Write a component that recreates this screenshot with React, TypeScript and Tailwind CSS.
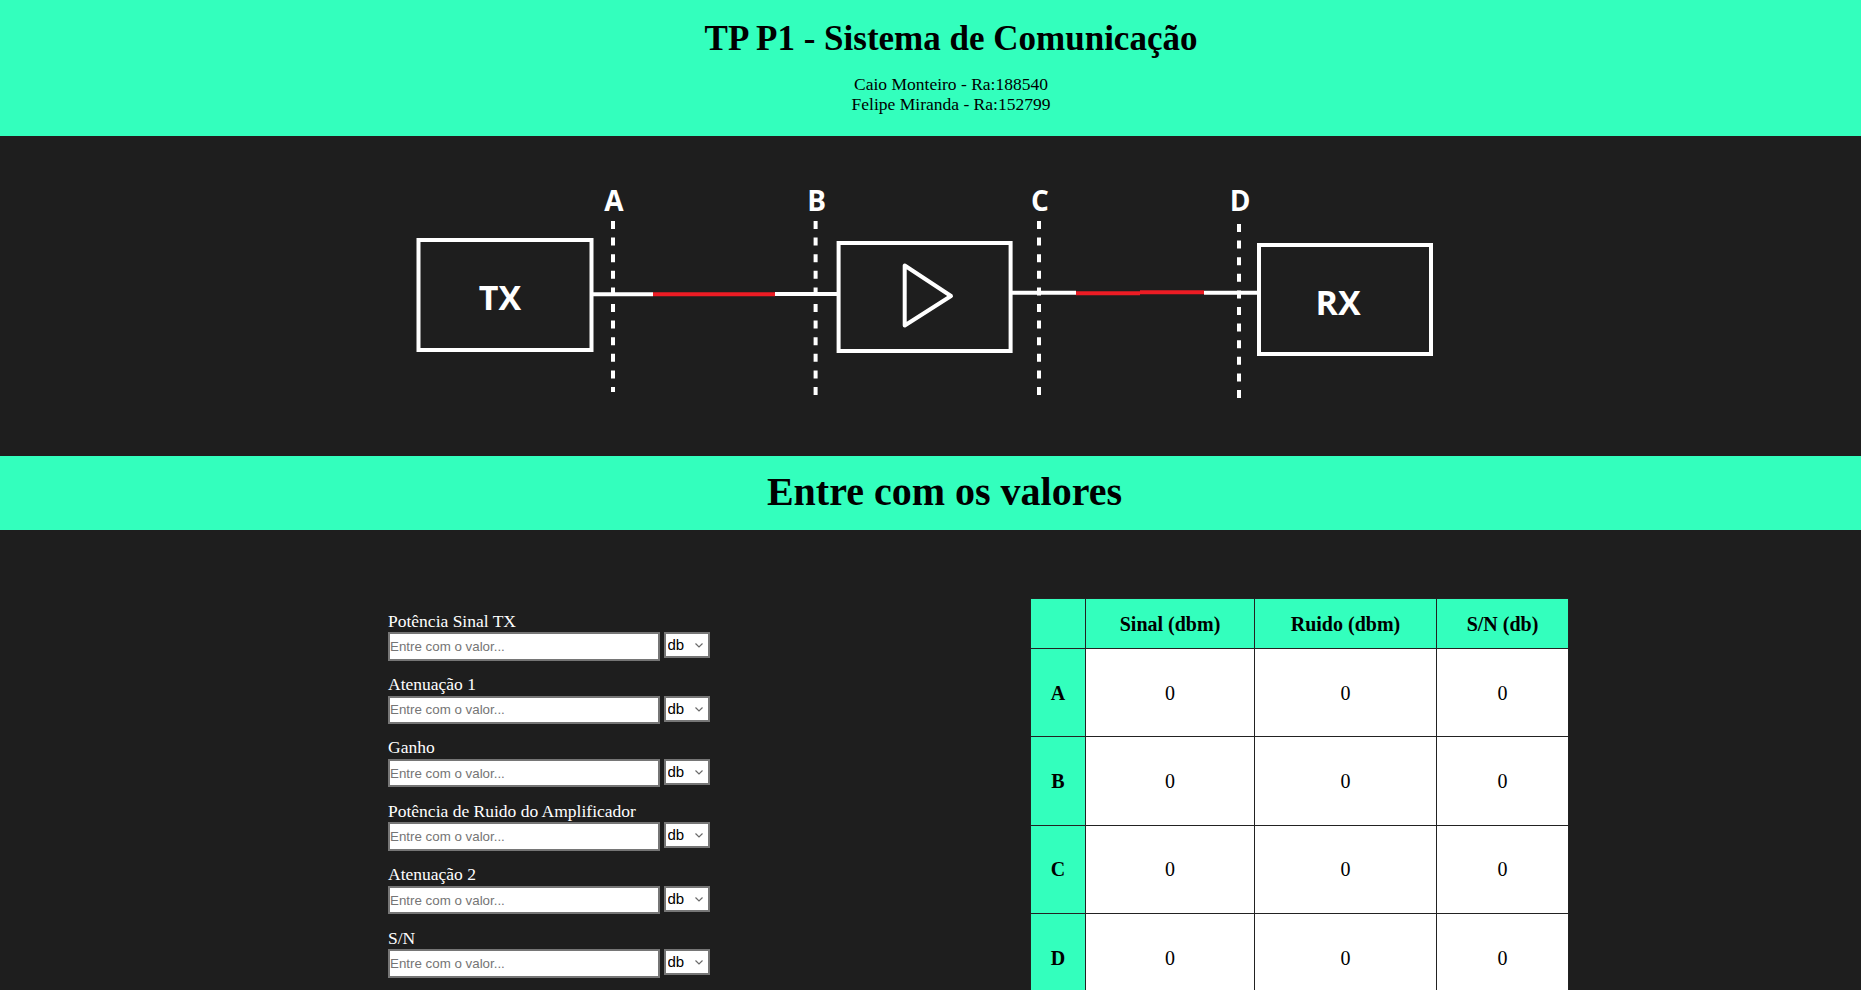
const fields = [
  "Potência Sinal TX",
  "Atenuação 1",
  "Ganho",
  "Potência de Ruido do Amplificador",
  "Atenuação 2",
  "S/N",
];

const points = ["A", "B", "C", "D"];

function Diagram() {
  const white = "#ffffff";
  const red = "#ed1c24";
  return (
    <svg
      viewBox="0 0 1861 320"
      className="block h-[320px] w-full"
      fill="none"
      style={{ fontFamily: "'Open Sans', 'Liberation Sans', sans-serif" }}
    >
      {/* tx */}
      <rect x="418.5" y="104" width="173" height="110" stroke={white} strokeWidth="4" />
      <text x="500" y="161" fill={white} fontSize="34" fontWeight="700" textAnchor="middle" dominantBaseline="central">
        TX
      </text>

      {/* link tx -> amp */}
      <line x1="591" y1="158.3" x2="653" y2="158.3" stroke={white} strokeWidth="4" />
      <line x1="653" y1="158.3" x2="775" y2="158.3" stroke={red} strokeWidth="4" />
      <line x1="775" y1="158" x2="837" y2="158" stroke={white} strokeWidth="4" />

      {/* amplifier */}
      <rect x="838.6" y="107" width="172" height="108" stroke={white} strokeWidth="4" />
      <polygon
        points="904.7,129.5 904.7,189.5 951,160"
        stroke={white}
        strokeWidth="4"
        strokeLinejoin="round"
      />

      {/* link amp -> rx */}
      <line x1="1010" y1="156.7" x2="1076" y2="156.7" stroke={white} strokeWidth="4" />
      <line x1="1076" y1="157.2" x2="1140" y2="157.2" stroke={red} strokeWidth="4" />
      <line x1="1140" y1="156.3" x2="1204" y2="156.3" stroke={red} strokeWidth="4" />
      <line x1="1204" y1="156.7" x2="1258" y2="156.7" stroke={white} strokeWidth="4" />

      {/* rx */}
      <rect x="1259" y="109" width="172" height="109" stroke={white} strokeWidth="4" />
      <text x="1338" y="166" fill={white} fontSize="34" fontWeight="700" textAnchor="middle" dominantBaseline="central">
        RX
      </text>

      {/* measuring points */}
      {[
        { l: "A", x: 613, y1: 85, y2: 256 },
        { l: "B", x: 815.6, y1: 85, y2: 259 },
        { l: "C", x: 1039, y1: 85, y2: 264 },
        { l: "D", x: 1239, y1: 88, y2: 267 },
      ].map((p) => (
        <g key={p.l}>
          <line
            x1={p.x}
            y1={p.y1}
            x2={p.x}
            y2={p.y2}
            stroke={white}
            strokeWidth="4"
            strokeDasharray="8 8.6"
          />
          <text
            x={p.x + 1}
            y="64"
            fill={white}
            fontSize="28"
            fontWeight="700"
            textAnchor="middle"
            dominantBaseline="central"
          >
            {p.l}
          </text>
        </g>
      ))}
    </svg>
  );
}

function Field({ label }: { label: string }) {
  return (
    <div className="flex flex-col">
      <label className="text-[17.5px] leading-[20px] text-white">{label}</label>
      <div className="mt-[1.5px] flex items-start">
        <input
          type="text"
          placeholder="Entre com o valor..."
          className="h-[28.5px] w-[272px] border-2 border-[#767676] bg-white pl-0 font-['Liberation_Sans',Arial,sans-serif] text-[13.33px] text-black outline-none placeholder:text-[#757575]"
        />
        <div className="relative ml-[3.5px]">
          <select className="h-[26px] w-[46px] appearance-none border-2 border-[#767676] bg-white pl-[2px] font-['Liberation_Sans',Arial,sans-serif] text-[15px] text-black outline-none">
            <option>db</option>
            <option>dbm</option>
            <option>W</option>
          </select>
          <svg
            className="pointer-events-none absolute top-[11px] right-[7px] h-[5px] w-[8px]"
            viewBox="0 0 8 5"
            fill="none"
          >
            <polyline points="0.5,0.5 4,4 7.5,0.5" stroke="#6b6b6b" strokeWidth="1.2" />
          </svg>
        </div>
      </div>
    </div>
  );
}

export default function App() {
  return (
    <div className="min-h-screen bg-[#1e1e1e] font-['Liberation_Serif','Times_New_Roman',serif]">
      <header className="bg-[#33ffbd] pt-[19px] pb-[22px] pl-[41px] text-center text-black">
        <h1 className="text-[35px] leading-[40px] font-bold">TP P1 - Sistema de Comunicação</h1>
        <div className="mt-[15px] text-[17.5px] leading-[20px]">
          <p>Caio Monteiro - Ra:188540</p>
          <p>Felipe Miranda - Ra:152799</p>
        </div>
      </header>

      <section className="h-[320px]">
        <Diagram />
      </section>

      <div className="h-[74px] bg-[#33ffbd] pt-[13px] pl-[28px] text-center text-black">
        <h2 className="text-[40px] leading-[46px] font-bold">Entre com os valores</h2>
      </div>

      <main className="flex items-start pt-[68px] pl-[388px]">
        <form className="mt-[12.7px] flex w-[322px] flex-col gap-[13.4px]">
          {fields.map((f) => (
            <Field key={f} label={f} />
          ))}
        </form>

        <table className="ml-[320px] w-[538px] table-fixed border-collapse text-[20px] text-black">
          <colgroup>
            <col className="w-[55px]" />
            <col className="w-[169px]" />
            <col className="w-[182px]" />
            <col className="w-[132px]" />
          </colgroup>
          <thead>
            <tr className="h-[50px] bg-[#33ffbd]">
              <th className="border border-[#222]"></th>
              <th className="border border-[#222] font-bold">Sinal (dbm)</th>
              <th className="border border-[#222] font-bold">Ruido (dbm)</th>
              <th className="border border-[#222] font-bold">S/N (db)</th>
            </tr>
          </thead>
          <tbody>
            {points.map((p) => (
              <tr key={p} className="h-[88.3px]">
                <th className="border border-[#222] bg-[#33ffbd] font-bold">{p}</th>
                <td className="border border-[#222] bg-white text-center">0</td>
                <td className="border border-[#222] bg-white text-center">0</td>
                <td className="border border-[#222] bg-white text-center">0</td>
              </tr>
            ))}
          </tbody>
        </table>
      </main>
    </div>
  );
}
